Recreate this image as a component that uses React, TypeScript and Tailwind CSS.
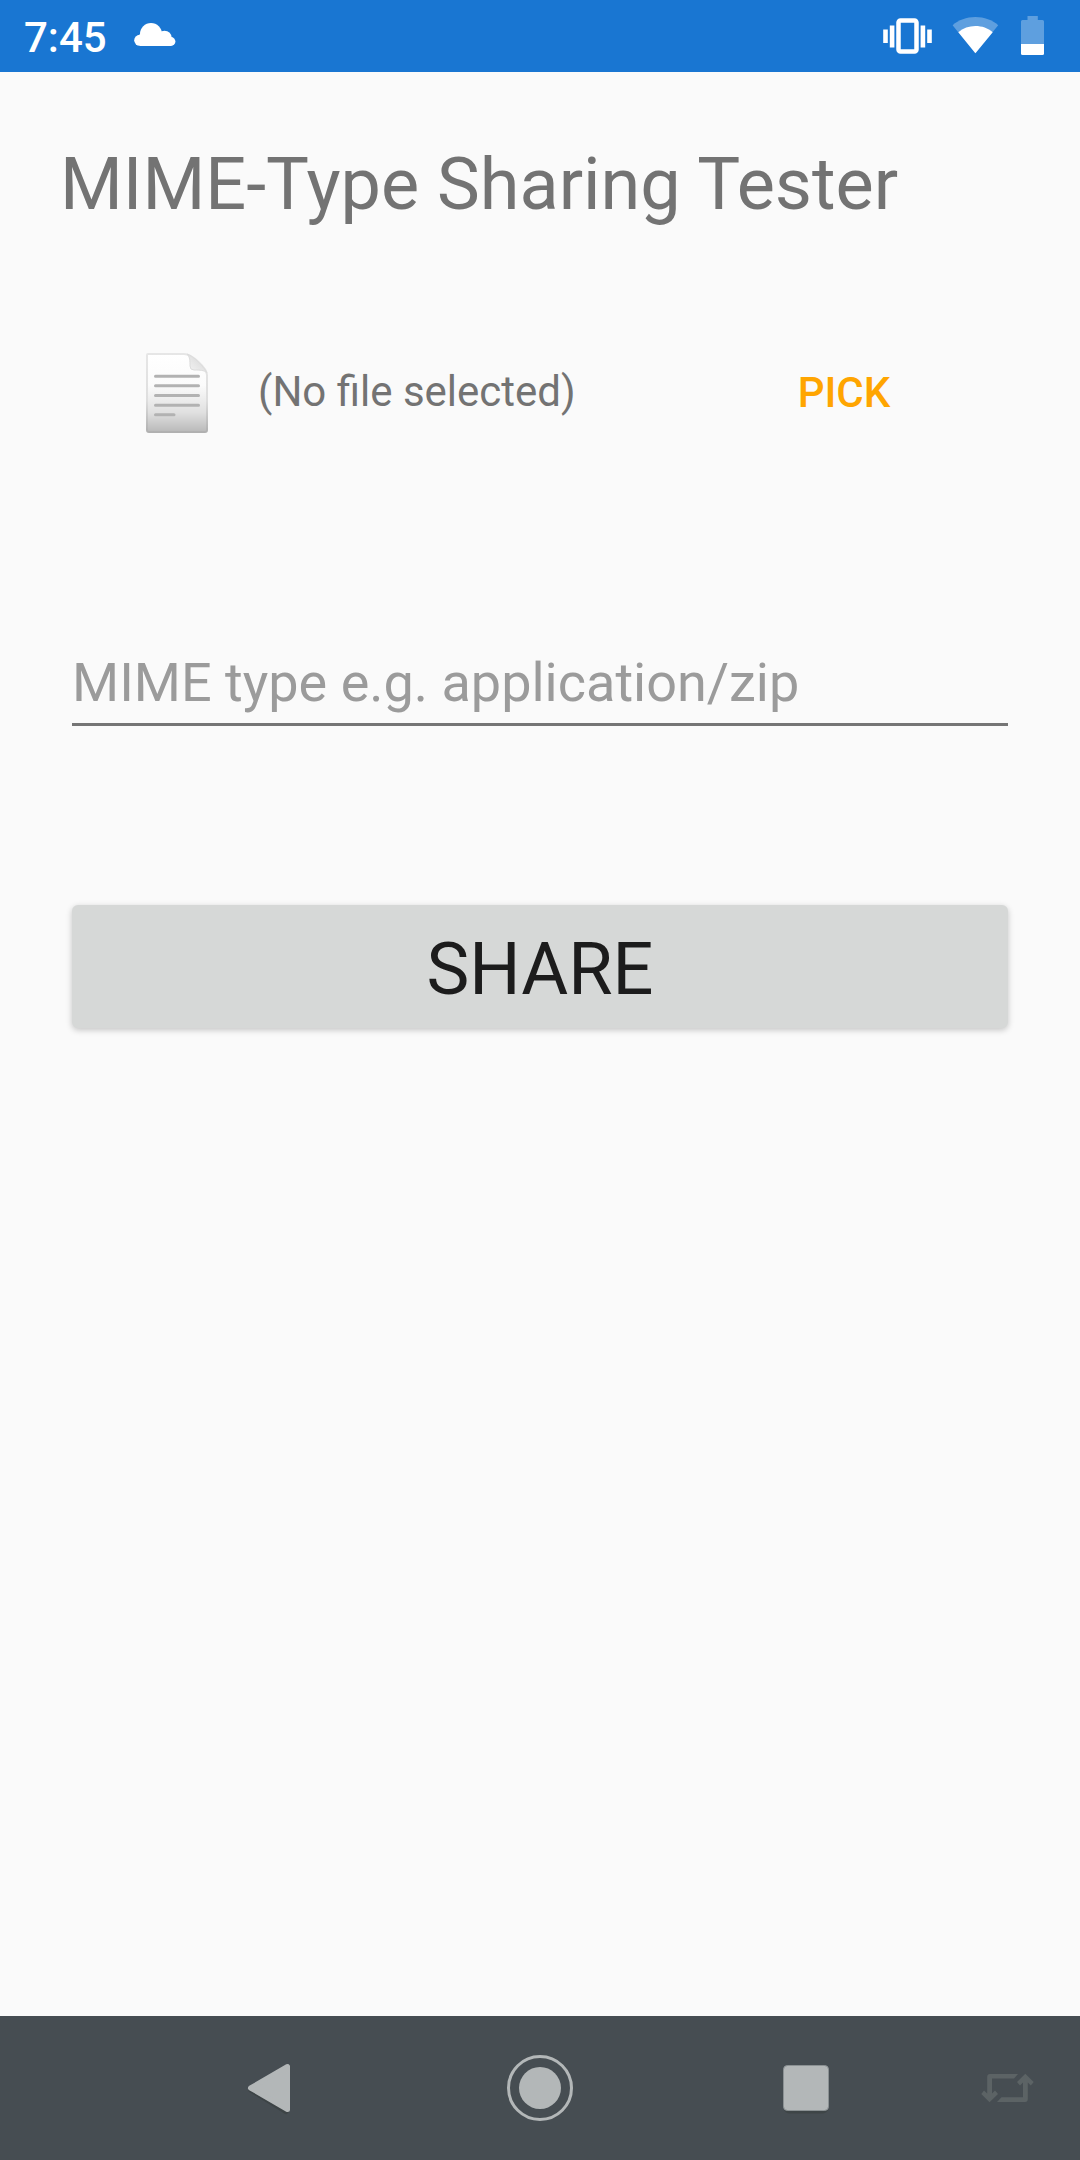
import React from "react";

function CloudIcon() {
  return (
    <svg viewBox="134 12 42 48" className="h-12 w-[42px]" fill="#ffffff" aria-hidden="true">
      <circle cx="151" cy="34" r="11" />
      <circle cx="164.500" cy="38" r="7.300" />
      <circle cx="139.700" cy="40.300" r="5.500" />
      <circle cx="171" cy="41.500" r="4.400" />
      <path d="M139.700 34H165L171 38V45.900H139.700Z" />
    </svg>
  );
}

function VibrateIcon() {
  return (
    <svg viewBox="882 12 49 48" className="h-12 w-[49px] overflow-visible" aria-hidden="true">
      <rect x="898.500" y="20.500" width="18" height="31" rx="2" fill="none" stroke="#ffffff" strokeWidth="4.500" />
      <g fill="#ffffff">
        <rect x="883.200" y="29.500" width="4.600" height="13.500" />
        <rect x="889.800" y="25.500" width="4.600" height="22" />
        <rect x="920.600" y="25.500" width="4.600" height="22" />
        <rect x="927.200" y="29.500" width="4.600" height="13.500" />
      </g>
    </svg>
  );
}

function WifiIcon() {
  return (
    <svg viewBox="952 12 48 48" className="size-12" aria-hidden="true">
      <path d="M952.600 25.200C958.500 20 966.500 17 975.400 17C984.300 17 992.300 20 998.200 25.200L975.400 53.300Z" fill="#ffffff" fillOpacity="0.3" />
      <path d="M958.300 32.200C963 28 969 26 975.400 26C981.800 26 988 28 992.700 32.200L975.400 53.300Z" fill="#ffffff" />
    </svg>
  );
}

function BatteryIcon() {
  return (
    <svg viewBox="1021 12 23 48" className="h-12 w-[23px]" aria-hidden="true">
      <path d="M1027.500 16H1037.800V20H1042.500Q1044 20 1044 21.500V44H1021V21.500Q1021 20 1022.500 20H1027.500Z" fill="#ffffff" fillOpacity="0.3" />
      <path d="M1021 44H1044V53.500Q1044 55 1042.500 55H1022.500Q1021 55 1021 53.500Z" fill="#ffffff" />
    </svg>
  );
}

function DocumentIcon() {
  return (
    <svg viewBox="0 0 62 80" className="h-20 w-[62px] shrink-0" aria-hidden="true">
      <defs>
        <linearGradient id="sheet" x1="0" y1="0" x2="0" y2="1">
          <stop offset="0" stopColor="#ffffff" />
          <stop offset="0.400" stopColor="#fbfbfb" />
          <stop offset="0.750" stopColor="#e0e0e0" />
          <stop offset="1" stopColor="#b9b9b9" />
        </linearGradient>
        <linearGradient id="edge" x1="0" y1="0" x2="0" y2="1">
          <stop offset="0" stopColor="#e6e6e6" />
          <stop offset="0.600" stopColor="#dedede" />
          <stop offset="1" stopColor="#b0b0b0" />
        </linearGradient>
        <linearGradient id="fold" x1="0" y1="1" x2="0.700" y2="0.300">
          <stop offset="0" stopColor="#f6f6f6" />
          <stop offset="1" stopColor="#dddddd" />
        </linearGradient>
      </defs>
      <path d="M2 1H38C46 1 61 15 61 22V77Q61 79 59 79H3Q1 79 1 77V2Q1 1 2 1Z" fill="url(#sheet)" stroke="url(#edge)" strokeWidth="2" />
      <path d="M41 1C44 4 44 8 44 13Q44 17 48 17C54 17 58 17 61 20C58 14 49 4 41 1Z" fill="url(#fold)" stroke="#dcdcdc" strokeWidth="1" />
      <path d="M9.500 23.300H52.500M9.500 32.800H52.500M9.500 42.500H52.500M9.500 52.200H52.500M9.500 61.800H28" stroke="#b2b2b2" strokeWidth="3" strokeLinecap="round" />
    </svg>
  );
}

function StatusBar() {
  return (
    <header className="flex h-[72px] items-center bg-[#1976d2] pl-6 pr-9">
      <time className="pt-[3px] text-[42px] leading-[49px] font-medium text-white">7:45</time>
      <div className="ml-[27px]">
        <CloudIcon />
      </div>
      <div className="ml-auto flex items-center gap-[21px]">
        <VibrateIcon />
        <WifiIcon />
        <BatteryIcon />
      </div>
    </header>
  );
}

function NavBar() {
  return (
    <nav className="grid h-36 grid-cols-[1fr_2fr_2fr_2fr_1fr] items-center bg-[#464d52]">
      <span />
      <button type="button" aria-label="Back" className="flex justify-center">
        <svg viewBox="234 2052 72 72" className="size-[72px]">
          <path d="M251 2090L286 2111.500" stroke="#3d4446" strokeWidth="5" strokeLinecap="round" />
          <path d="M250.500 2088L287.500 2066.500V2109.500Z" fill="#b3b7b8" stroke="#b3b7b8" strokeWidth="5" strokeLinejoin="round" />
        </svg>
      </button>
      <button type="button" aria-label="Home" className="flex justify-center">
        <svg viewBox="504 2052 72 72" className="size-[72px]">
          <circle cx="540" cy="2088" r="31.500" fill="none" stroke="#b3b7b8" strokeWidth="3" />
          <circle cx="540" cy="2088" r="21" fill="#b3b7b8" />
        </svg>
      </button>
      <button type="button" aria-label="Recent apps" className="flex justify-center">
        <svg viewBox="774 2052 72 72" className="size-[72px]">
          <rect x="784" y="2068" width="44" height="45.500" rx="5" fill="#3e4547" />
          <rect x="783.500" y="2065.500" width="45" height="45" rx="4" fill="#b3b7b8" stroke="#8b9193" strokeWidth="1" />
        </svg>
      </button>
      <button type="button" aria-label="Rotate screen" className="flex justify-center">
        <svg viewBox="976.500 2052 72 72" className="size-[72px]">
          <g fill="#5c6365">
            <path d="M1017.500 2074H989.500Q986.700 2074 986.700 2077V2093.500L983.500 2090.500L980.800 2094L989 2102.200L997.500 2094L994.500 2090.500L991.500 2093.500V2078.500H1013.500Z" />
            <path d="M996.500 2102H1024.500Q1027.300 2102 1027.300 2099V2082.500L1030.300 2085.500L1033.200 2082L1024.800 2073.800L1016.500 2082L1019.500 2085.500L1022.500 2082.500V2097.300H1001Z" />
          </g>
        </svg>
      </button>
    </nav>
  );
}

export default function App() {
  return (
    <div className="flex min-h-screen flex-col bg-[#fafafa] font-[Roboto,sans-serif]">
      <StatusBar />
      <main className="flex-1 px-[60px] pt-[71px]">
        <h1 className="text-[72px] leading-[84px] text-[#737373]">MIME-Type Sharing Tester</h1>
        <section className="mt-[94px] flex h-36 items-center pl-[86px] pr-11">
          <DocumentIcon />
          <p className="ml-[50px] flex-1 pb-[3px] text-[42px] leading-[49px] text-[#737373]">(No file selected)</p>
          <button type="button" className="h-36 w-[264px] pb-[2px] text-[42px] leading-[49px] font-medium text-[#ffa500]">
            PICK
          </button>
        </section>
        <div className="mx-3 mt-[186px] flex flex-col">
          <input
            type="text"
            aria-label="MIME type"
            placeholder="MIME type e.g. application/zip"
            className="w-full border-b-[3px] border-[#757575] bg-transparent pb-[9px] text-[54px] leading-[63px] text-[#212121] outline-none placeholder:text-[#9b9b9b]"
          />
          <button
            type="button"
            className="mt-[179px] w-full rounded-md bg-[#d6d8d7] pt-[23px] pb-4 text-[72px] leading-[84px] text-[#1c1c1c] shadow-[0_2px_6px_rgba(0,0,0,0.22)]"
          >
            SHARE
          </button>
        </div>
      </main>
      <NavBar />
    </div>
  );
}
